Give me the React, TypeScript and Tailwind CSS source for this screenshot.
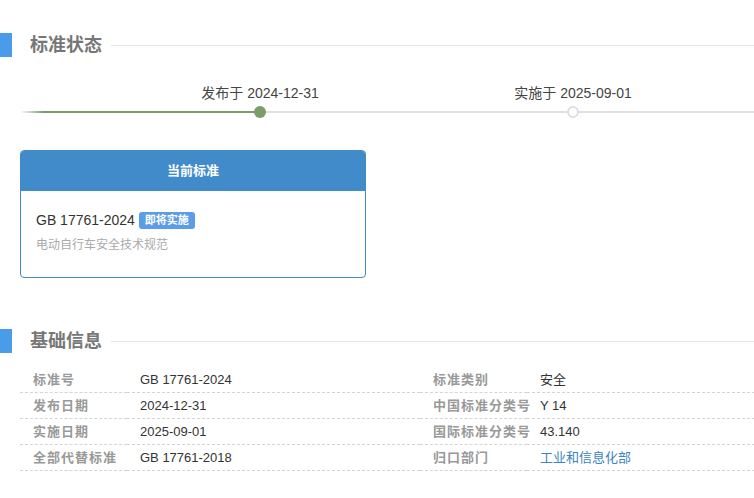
import React from "react";

const FONT = { fontFamily: '"Liberation Sans", "Noto Sans CJK SC", sans-serif' };

const SectionTitle = ({ title }: { title: string }) => (
  <div className="flex items-center">
    <div className="w-3 h-6 bg-[#4a9be9]" />
    <h2 className="ml-[18px] text-[18px] leading-6 font-bold text-[#777]">{title}</h2>
    <div className="ml-[9px] flex-1 h-px bg-[#e5e5e5]" />
  </div>
);

const TimelineNode = ({ label, done }: { label: string; done: boolean }) => (
  <div className="flex flex-col items-center w-0">
    <span className="whitespace-nowrap text-[14px] leading-[18px] text-[#444]">{label}</span>
    {done ? (
      <div className="relative z-10 mt-[4px] w-3 h-3 shrink-0 rounded-full bg-[#7a9d6a]" />
    ) : (
      <div className="relative z-10 mt-[4px] w-3 h-3 shrink-0 rounded-full bg-white border-2 border-[#dedede]" />
    )}
  </div>
);

const rows = [
  ["标准号", "GB 17761-2024", "标准类别", "安全"],
  ["发布日期", "2024-12-31", "中国标准分类号", "Y 14"],
  ["实施日期", "2025-09-01", "国际标准分类号", "43.140"],
  ["全部代替标准", "GB 17761-2018", "归口部门", "工业和信息化部"],
];

const Cell = ({ children, label, link }: { children: React.ReactNode; label?: boolean; link?: boolean }) => (
  <div
    className={
      "h-[26px] flex items-center pl-[13px] text-[13px] whitespace-nowrap border-b border-dashed border-[#d4d4d4] " +
      (label ? "font-bold text-[#999] tracking-[1px]" : link ? "text-[#3a83c4]" : "text-[#333]")
    }
  >
    {children}
  </div>
);

export default function App() {
  return (
    <div className="w-[754px] h-[498px] overflow-hidden bg-white pt-[33px]" style={FONT}>
      <SectionTitle title="标准状态" />

      {/* timeline */}
      <div className="mt-[27px] ml-5 flex items-end">
        <div className="w-[240px] h-[2px] mb-[5px] bg-[linear-gradient(to_right,#ffffff,#7a9d6a_10%)]" />
        <TimelineNode label="发布于 2024-12-31" done />
        <div className="w-[313px] h-[2px] mb-[5px] bg-[#e0e0e0]" />
        <TimelineNode label="实施于 2025-09-01" done={false} />
        <div className="flex-1 h-[2px] mb-[5px] bg-[#e0e0e0]" />
      </div>

      {/* card */}
      <div className="mt-[32px] ml-5 w-[346px] h-[128px] border border-[#428bca] rounded-[4px] overflow-hidden">
        <div className="h-[40px] bg-[#428bca] flex items-center justify-center text-white text-[13px] font-bold">
          当前标准
        </div>
        <div className="pl-[15px] pt-[19px]">
          <div className="flex items-center">
            <span className="text-[14px] text-[#333]">GB 17761-2024</span>
            <span className="ml-[4px] px-[6px] h-[17px] leading-[17px] rounded-[3px] bg-[#5b9de6] text-white text-[11px] font-bold">
              即将实施
            </span>
          </div>
          <div className="mt-[5px] text-[12px] text-[#aaa]">电动自行车安全技术规范</div>
        </div>
      </div>

      <div className="mt-[51px]">
        <SectionTitle title="基础信息" />
      </div>

      <div className="mt-[14px] ml-5 grid grid-cols-[107px_293px_107px_293px]">
        {rows.map((r) => (
          <React.Fragment key={r[0]}>
            <Cell label>{r[0]}</Cell>
            <Cell>{r[1]}</Cell>
            <Cell label>{r[2]}</Cell>
            <Cell link={r[2] === "归口部门"}>{r[3]}</Cell>
          </React.Fragment>
        ))}
      </div>
    </div>
  );
}
